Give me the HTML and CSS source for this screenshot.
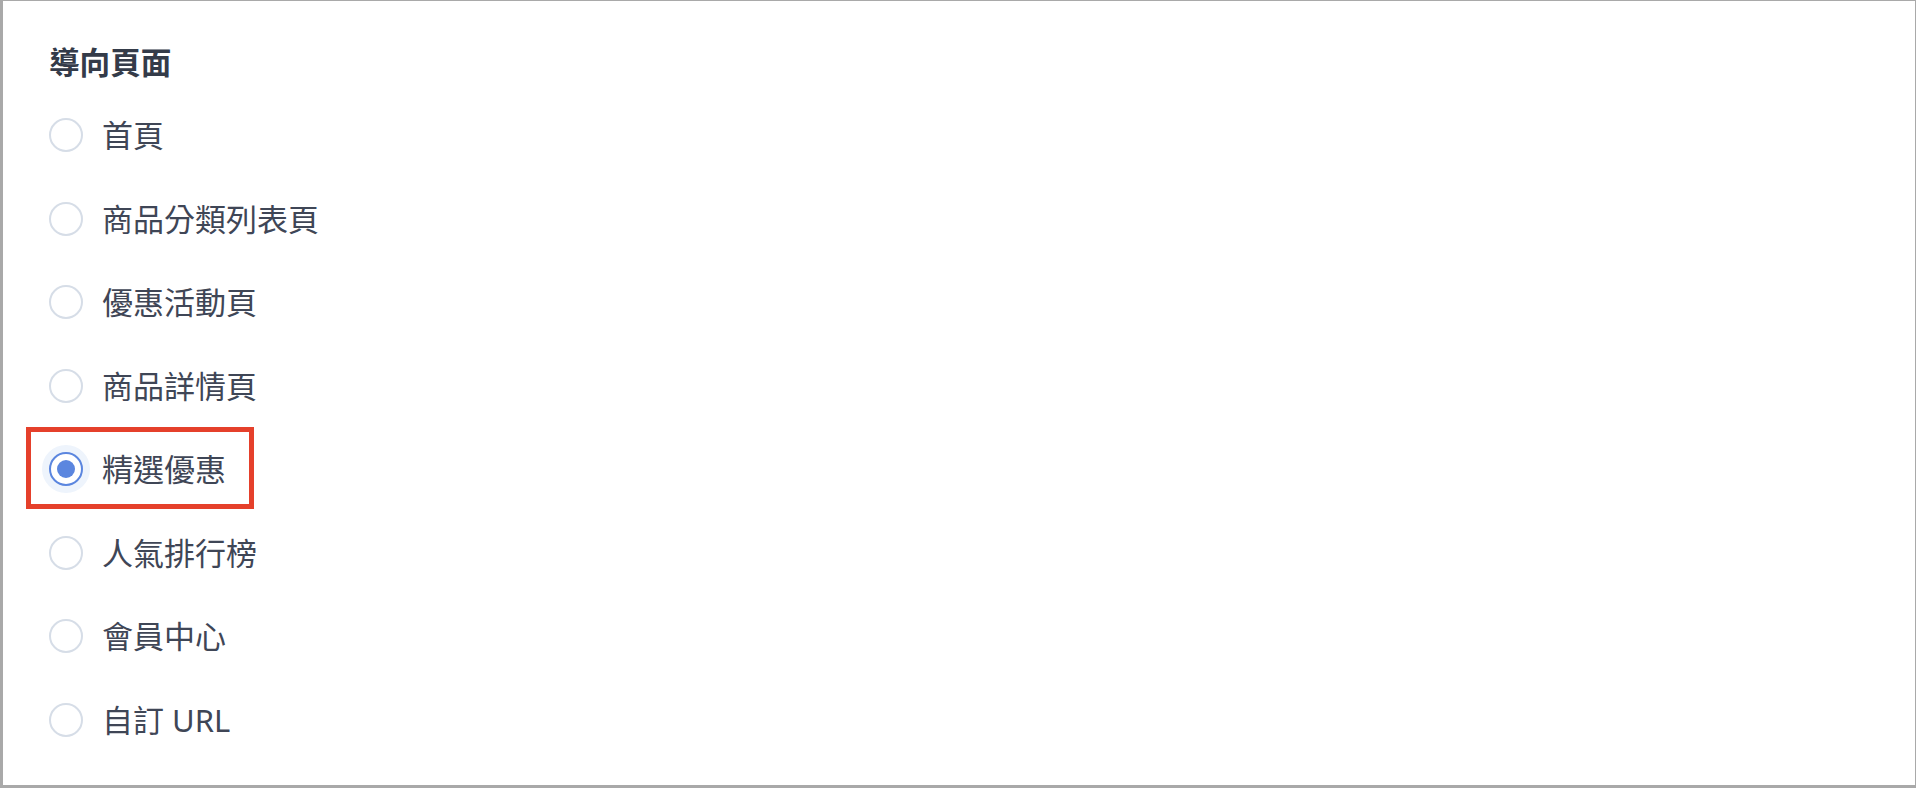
FILE: index.html
```html
<!DOCTYPE html>
<html lang="zh-Hant">
<head>
<meta charset="utf-8">
<title>導向頁面</title>
<link rel="stylesheet" href="styles.css">
</head>
<body>
<div class="panel">
  <div class="title">導向頁面</div>
  <div class="options">
    <label class="option"><span class="radio"></span><span class="label">首頁</span></label>
    <label class="option"><span class="radio"></span><span class="label">商品分類列表頁</span></label>
    <label class="option"><span class="radio"></span><span class="label">優惠活動頁</span></label>
    <label class="option"><span class="radio"></span><span class="label">商品詳情頁</span></label>
    <label class="option selected"><span class="radio"></span><span class="label">精選優惠</span><span class="highlight"></span></label>
    <label class="option"><span class="radio"></span><span class="label">人氣排行榜</span></label>
    <label class="option"><span class="radio"></span><span class="label">會員中心</span></label>
    <label class="option"><span class="radio"></span><span class="label">自訂 URL</span></label>
  </div>
</div>
</body>
</html>
```

FILE: styles.css
```css
html, body {
  margin: 0;
  padding: 0;
  background: #ffffff;
}

body {
  width: 1916px;
  height: 788px;
  overflow: hidden;
  font-family: "Noto Sans", "Noto Sans CJK TC", sans-serif;
}

.panel {
  box-sizing: border-box;
  width: 1916px;
  height: 788px;
  border-style: solid;
  border-color: #a9a9a9;
  border-width: 1px 1px 3px 3px;
  padding: 41px 0 0 46px;
  display: flex;
  flex-direction: column;
  gap: 29px;
}

.title {
  font-size: 30.6px;
  line-height: 40px;
  font-weight: 700;
  color: #343b49;
}

.options {
  display: flex;
  flex-direction: column;
  gap: 35.5px;
}

.option {
  position: relative;
  display: flex;
  align-items: center;
  height: 48px;
  gap: 19px;
}

.radio {
  box-sizing: border-box;
  width: 34px;
  height: 34px;
  border-radius: 50%;
  border: 2px solid #d6dde7;
  background: #ffffff;
  flex: none;
  display: flex;
  align-items: center;
  justify-content: center;
}

.option.selected .radio {
  border-color: #5b86df;
  box-shadow: 0 0 0 7px #eef4fc;
}

.option.selected .radio::after {
  content: "";
  width: 18px;
  height: 18px;
  border-radius: 50%;
  background: #5b86df;
}

.label {
  font-size: 31px;
  line-height: 40px;
  color: #3f4656;
}

.highlight {
  position: absolute;
  left: -23px;
  top: -18px;
  width: 228px;
  height: 82px;
  box-sizing: border-box;
  border: 5px solid #e5402b;
  pointer-events: none;
}
```
